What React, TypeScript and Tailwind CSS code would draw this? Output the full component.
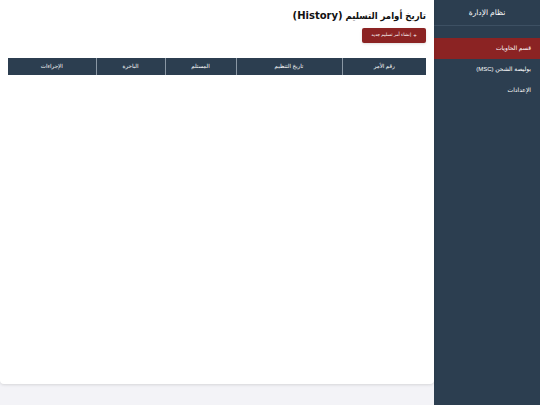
import React from 'react';

const NAV_ITEMS = [
  { label: 'قسم الحاويات', active: true },
  { label: 'بوليصة الشحن (MSC)', active: false },
  { label: 'الإعدادات', active: false },
];

const COLUMNS = [
  { label: 'رقم الأمر', width: 'w-[84px]' },
  { label: 'تاريخ التنظيم', width: 'w-[106px]' },
  { label: 'المستلم', width: 'w-[71px]' },
  { label: 'الباخرة', width: 'w-[69px]' },
  { label: 'الإجراءات', width: '' },
];

const Sidebar: React.FC = () => (
  <aside className="w-[106px] shrink-0 h-[405px] bg-[#2c3e50] text-white">
    <div className="h-[26px] flex items-center justify-center border-b border-[#3d5063] text-[7.5px]">
      نظام الإدارة
    </div>
    <nav className="mt-[12px]">
      {NAV_ITEMS.map(item => (
        <div
          key={item.label}
          className={`h-[21px] flex items-center px-[9px] text-[6px] ${item.active ? 'bg-[#8b2323]' : ''}`}
        >
          {item.label}
        </div>
      ))}
    </nav>
  </aside>
);

const App: React.FC = () => {
  return (
    <div
      dir="rtl"
      className="flex w-[540px] h-[405px] bg-[#f3f3f7] overflow-hidden"
      style={{ fontFamily: '"Liberation Sans", "DejaVu Sans", sans-serif' }}
    >
      <Sidebar />
      <main className="flex-1">
        <div className="h-[384px] bg-white rounded-b-[4px] shadow-[0_1px_3px_rgba(0,0,0,0.12)] px-[8px] pt-[9px]">
          <h1 className="text-[9.5px] font-bold text-[#111] leading-[14px] font-['DejaVu_Sans_Condensed','DejaVu_Sans',sans-serif]">
            تاريخ أوامر التسليم{' '}
            <span className="text-[10px] font-['DejaVu_Sans',sans-serif]">(History)</span>
          </h1>
          <div className="mt-[5px]">
            <button className="h-[15px] w-[64px] bg-[#8b2323] text-white text-[4.5px] rounded-[2px] flex items-center justify-center gap-[2px] shadow-sm">
              <span className="text-[6px]">+</span>
              <span>إنشاء أمر تسليم جديد</span>
            </button>
          </div>
          <table className="mt-[15px] w-full border-collapse">
            <thead>
              <tr className="bg-[#2c3e50] text-white h-[17px]">
                {COLUMNS.map(col => (
                  <th
                    key={col.label}
                    className={`${col.width} text-[5.5px] font-normal text-center border-l border-[#8a97a4] last:border-l-0`}
                  >
                    {col.label}
                  </th>
                ))}
              </tr>
            </thead>
            <tbody />
          </table>
        </div>
      </main>
    </div>
  );
};

export default App;
